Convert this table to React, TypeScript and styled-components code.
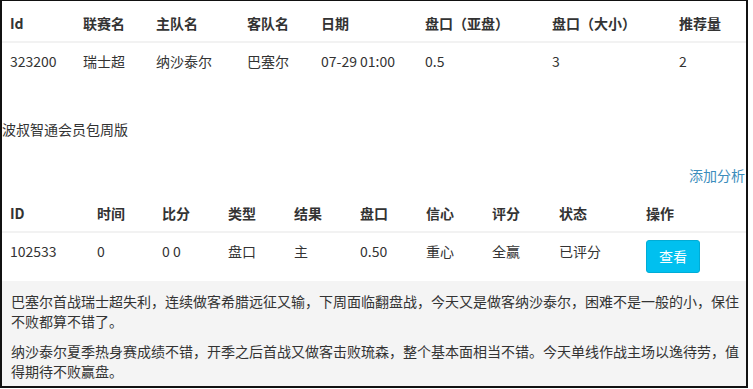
import React from 'react'
import styled, { createGlobalStyle } from 'styled-components'

const GlobalStyle = createGlobalStyle`
    html, body {
        margin: 0;
        padding: 0;
        background: #fff;
    }
    body {
        font-family: "Noto Sans CJK SC", "Liberation Sans", sans-serif;
        font-size: 14px;
        line-height: 20px;
        color: #333;
    }
`

const Frame = styled.div`
    width: 744px;
    height: 385px;
    border-style: solid;
    border-color: #111;
    border-width: 1px 2px 2px 2px;
    overflow: hidden;
    display: flex;
    flex-direction: column;
`

const Table = styled.table<{ $mt?: number }>`
    width: 744px;
    table-layout: fixed;
    border-collapse: collapse;
    border-spacing: 0;
    margin-top: ${p => p.$mt || 0}px;
`

const Th = styled.th`
    text-align: left;
    font-weight: bold;
    padding: 12px 8px 8px;
    line-height: 20px;
    border-bottom: 2px solid #f2f2f2;
    white-space: nowrap;
`

const Td = styled.td`
    padding: 8px;
    line-height: 20px;
    vertical-align: top;
    white-space: nowrap;
`

const PackTitle = styled.div`
    margin-top: 40px;
    line-height: 20px;
`

const AddRow = styled.div`
    display: flex;
    justify-content: flex-end;
    margin-top: 26px;
    padding-right: 1px;
`

const AddLink = styled.a`
    color: #3c8dbc;
    text-decoration: none;
    line-height: 20px;
    cursor: pointer;
`

const ViewButton = styled.button`
    font-family: inherit;
    font-size: 14px;
    line-height: 20px;
    color: #fff;
    background: #00c0ef;
    border: 1px solid #00acd6;
    border-radius: 3px;
    padding: 5px 12px 6px;
    margin-top: -1px;
    cursor: pointer;
`

const Analysis = styled.div`
    background: #f4f4f4;
    padding: 10px 7px 0 9px;
    flex: 1;
`

const Para = styled.p`
    margin: 0 0 10px;
    line-height: 20px;
`

const matchCols = [73, 73, 91, 74, 104, 127, 127, 75]
const matchHead = ['Id', '联赛名', '主队名', '客队名', '日期', '盘口（亚盘）', '盘口（大小）', '推荐量']
const matchRow = ['323200', '瑞士超', '纳沙泰尔', '巴塞尔', '07-29 01:00', '0.5', '3', '2']

const tipCols = [87, 65, 66, 66, 66, 66, 66, 67, 87, 108]
const tipHead = ['ID', '时间', '比分', '类型', '结果', '盘口', '信心', '评分', '状态', '操作']
const tipRow = ['102533', '0', '0 0', '盘口', '主', '0.50', '重心', '全赢', '已评分']

export default function App() {
    return (
        <>
            <GlobalStyle />
            <Frame>
                <Table>
                    <colgroup>
                        {matchCols.map((w, i) => <col key={i} style={{ width: w }} />)}
                    </colgroup>
                    <thead>
                        <tr>{matchHead.map(h => <Th key={h}>{h}</Th>)}</tr>
                    </thead>
                    <tbody>
                        <tr>{matchRow.map((c, i) => <Td key={i}>{c}</Td>)}</tr>
                    </tbody>
                </Table>

                <PackTitle>波叔智通会员包周版</PackTitle>
                <AddRow>
                    <AddLink>添加分析</AddLink>
                </AddRow>

                <Table $mt={6}>
                    <colgroup>
                        {tipCols.map((w, i) => <col key={i} style={{ width: w }} />)}
                    </colgroup>
                    <thead>
                        <tr>{tipHead.map(h => <Th key={h}>{h}</Th>)}</tr>
                    </thead>
                    <tbody>
                        <tr>
                            {tipRow.map((c, i) => <Td key={i}>{c}</Td>)}
                            <Td><ViewButton>查看</ViewButton></Td>
                        </tr>
                    </tbody>
                </Table>

                <Analysis>
                    <Para>巴塞尔首战瑞士超失利，连续做客希腊远征又输，下周面临翻盘战，今天又是做客纳沙泰尔，困难不是一般的小，保住不败都算不错了。</Para>
                    <Para>纳沙泰尔夏季热身赛成绩不错，开季之后首战又做客击败琉森，整个基本面相当不错。今天单线作战主场以逸待劳，值得期待不败赢盘。</Para>
                </Analysis>
            </Frame>
        </>
    )
}
